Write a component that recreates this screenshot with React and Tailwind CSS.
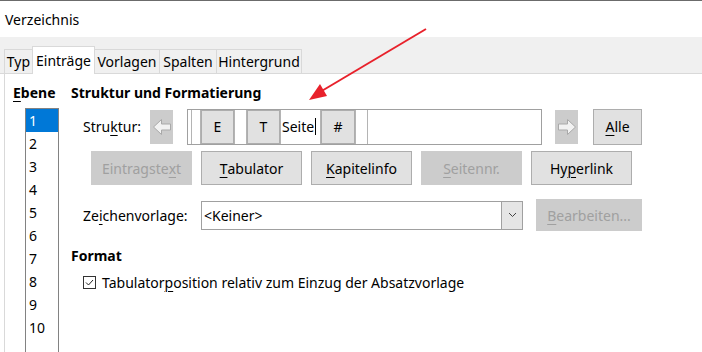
import React from 'react';

// access-key underline, like the Windows dialog draws it
const U = ({ children }) => <span className="underline underline-offset-[3px] decoration-1">{children}</span>

const tabs = [
  { label: 'Typ', w: 'w-[29px]' },
  { label: 'Einträge', w: 'w-[63px]', active: true },
  { label: 'Vorlagen', w: 'w-[66px]' },
  { label: 'Spalten', w: 'w-[58px]' },
  { label: 'Hintergrund', w: 'w-[86px]' },
]

const levels = ['1', '2', '3', '4', '5', '6', '7', '8', '9', '10']

const ArrowButton = ({ dir }) => (
  <div className="w-[23px] h-[34px] bg-[#cccccc] flex items-center justify-center">
    <svg width="20" height="18" viewBox="0 0 20 18" className={dir === 'right' ? 'scale-x-[-1]' : ''}>
      <polygon points="1.5,9 9.5,1.5 9.5,6 18.5,6 18.5,12 9.5,12 9.5,16.5" fill="#f2f2f2" stroke="#a9a9a9" strokeWidth="1" />
    </svg>
  </div>
)

const Btn = ({ children, disabled, className = '' }) => (
  <div
    className={
      'flex items-center justify-center border ' +
      (disabled ? 'bg-[#cccccc] border-[#cccccc] text-[#a0a0a0] ' : 'bg-[#e1e1e1] border-[#adadad] text-black ') +
      className
    }>
    {children}
  </div>
)

const Seg = ({ children, w }) => (
  <div className={'h-full bg-[#e1e1e1] border border-[#adadad] flex items-center justify-center ' + w}>{children}</div>
)
const Blank = ({ w }) => <div className={'h-full bg-white border-x border-[#b4b4b4] ' + w} />

export default function App() {
  return (
    <div className="relative w-[702px] h-[352px] overflow-hidden bg-white text-[14px] text-black font-['Noto_Sans',sans-serif]">
      <div className="h-px bg-[#6b6b6b]" />
      <div className="h-[36px] pl-[5px] pt-[9px] leading-[20px]">Verzeichnis</div>

      {/* tab strip */}
      <div className="h-[37px] bg-[#f0f0f0] border-b border-[#d9d9d9] flex items-end pl-[5px]">
        {tabs.map((t, i) =>
          t.active ? (
            <div key={i} className={'-mb-px -ml-px h-[28px] bg-white border-x border-t border-[#d9d9d9] flex items-center justify-center ' + t.w}>
              {t.label}
            </div>
          ) : (
            <div key={i} className={'-ml-px h-[24px] border-x border-t border-[#d9d9d9] flex items-center justify-center ' + t.w}>
              {t.label}
            </div>
          )
        )}
      </div>

      <div className="flex ml-[4px] h-[278px] border-l border-[#d9d9d9]">
        {/* Ebene */}
        <div className="w-[66px] pl-[8px] pt-[9px] flex flex-col">
          <div className="leading-[20px] font-bold"><U>E</U>bene</div>
          <div className="mt-[5px] ml-[12px] w-[34px] flex-1 border border-b-0 border-[#828282]">
            {levels.map((l, i) => (
              <div key={l} className={'h-[23px] leading-[23px] pl-[3px] ' + (i === 0 ? 'bg-[#0078d7] text-white' : '')}>{l}</div>
            ))}
          </div>
        </div>

        <div className="flex-1 pt-[9px]">
          <div className="leading-[20px] font-bold">Struktur und Formatierung</div>

          <div className="mt-[5px] h-[37px] pl-[12px] flex items-center">
            <div className="w-[67px]">Stru<U>k</U>tur:</div>
            <ArrowButton dir="left" />
            <div className="ml-[14px] w-[355px] h-[36px] border border-[#a0a0a0] flex items-stretch pl-[3px]">
              <Blank w="w-[10px]" />
              <Seg w="w-[33px]">E</Seg>
              <Blank w="w-[13px]" />
              <Seg w="w-[33px]">T</Seg>
              <div className="w-[41px] h-full border-x border-[#b4b4b4] flex items-center pl-[1px]">
                Seite<span className="ml-[1px] w-px h-[17px] bg-black" />
              </div>
              <Seg w="w-[34px]">#</Seg>
              <Blank w="w-[13px]" />
            </div>
            <div className="ml-[13px]"><ArrowButton dir="right" /></div>
            <Btn className="ml-[15px] w-[49px] h-[36px]"><U>A</U>lle</Btn>
          </div>

          <div className="mt-[6px] pl-[20px] flex gap-[9px]">
            <Btn disabled className="w-[101px] h-[34px]">Eintragste<U>x</U>t</Btn>
            <Btn className="w-[101px] h-[34px]"><U>T</U>abulator</Btn>
            <Btn className="w-[101px] h-[34px]"><U>K</U>apitelinfo</Btn>
            <Btn disabled className="w-[101px] h-[34px]"><U>S</U>eitennr.</Btn>
            <Btn className="w-[101px] h-[34px]">Hy<U>p</U>erlink</Btn>
          </div>

          <div className="mt-[14px] h-[32px] pl-[12px] flex items-center">
            <div className="w-[118px]">Ze<U>i</U>chenvorlage:</div>
            <div className="w-[322px] h-[29px] border border-[#a0a0a0] flex items-center justify-between">
              <span className="pl-[2px]">&lt;Keiner&gt;</span>
              <div className="w-[21px] h-full bg-[#e5e5e5] border-l border-[#a0a0a0] flex items-center justify-center">
                <svg width="9" height="6" viewBox="0 0 9 6">
                  <polyline points="1,1 4.5,4.5 8,1" fill="none" stroke="#444" strokeWidth="1" />
                </svg>
              </div>
            </div>
            <Btn disabled className="ml-[13px] w-[106px] h-[32px]"><U>B</U>earbeiten...</Btn>
          </div>

          <div className="mt-[15px] leading-[20px] font-bold">Format</div>

          <div className="mt-[6px] h-[20px] pl-[12px] flex items-center">
            <div className="w-[13px] h-[13px] border border-[#333333] bg-white flex items-center justify-center">
              <svg width="9" height="7" viewBox="0 0 9 7">
                <polyline points="1,3.5 3.5,6 8,1" fill="none" stroke="#222" strokeWidth="1" />
              </svg>
            </div>
            <div className="ml-[6px]">Tabulator<U>p</U>osition relativ zum Einzug der Absatzvorlage</div>
          </div>
        </div>
      </div>

      {/* red annotation arrow */}
      <svg className="absolute left-0 top-0 pointer-events-none" width="702" height="352">
        <line x1="426" y1="29" x2="320" y2="92" stroke="#e8212b" strokeWidth="2" />
        <polygon points="309,100 320,84 327,96" fill="#e8212b" />
      </svg>
    </div>
  )
}
